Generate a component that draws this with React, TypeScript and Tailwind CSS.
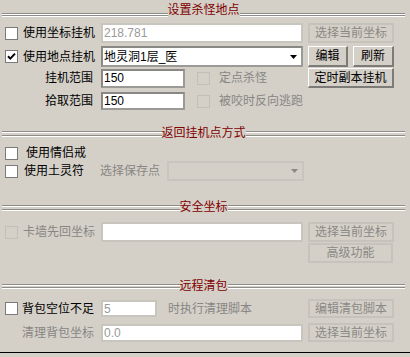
import React from 'react';

const GRAY = 'text-[#888683]';

function Groove({ className = '' }: { className?: string }) {
    return (
        <div className={`flex-1 flex flex-col ${className}`}>
            <div className="h-[2px] border-t border-b border-t-[#8e8c88] border-b-white" />
            <div className="h-[2px] border-t border-b border-t-[#8e8c88] border-b-white" />
        </div>
    );
}

function Header({ title, className, grooveClass }: { title: string; className: string; grooveClass: string }) {
    return (
        <div className={`flex items-start h-[16px] pl-[2px] pr-[5px] ${className}`}>
            <Groove className={grooveClass} />
            <span className="text-[#800000] leading-[16px] whitespace-nowrap">{title}</span>
            <Groove className={grooveClass} />
        </div>
    );
}

function Check({ checked = false, disabled = false, className = '' }: { checked?: boolean; disabled?: boolean; className?: string }) {
    return (
        <div
            className={`shrink-0 w-[13px] h-[13px] flex items-center justify-center border ${
                disabled ? 'border-[#c2bfb8] bg-[#d4d0c8]' : 'border-[#7a7a7a] bg-white'
            } ${className}`}
        >
            {checked && (
                <svg width="9" height="9" viewBox="0 0 9 9">
                    <path d="M1 4.2 L3.3 6.6 L8 1.6" fill="none" stroke="#000" strokeWidth="2" />
                </svg>
            )}
        </div>
    );
}

function Button({ label, disabled = false, className = '' }: { label: string; disabled?: boolean; className?: string }) {
    return (
        <div
            className={`shrink-0 flex items-center justify-center whitespace-nowrap ${
                disabled
                    ? 'border-2 border-[#c6c3bc] text-[#8a8884]'
                    : 'border-t border-l border-t-white border-l-white border-r-2 border-b-2 border-r-[#7c7b78] border-b-[#7c7b78] text-black'
            } ${className}`}
        >
            {label}
        </div>
    );
}

function Field({ value, disabled = false, className = '' }: { value: string; disabled?: boolean; className?: string }) {
    return (
        <div
            className={`shrink-0 flex items-center pl-[1px] bg-white border-2 ${
                disabled ? 'border-[#c8c5bf] text-[#9a9a9a]' : 'border-[#9c9a96] border-t-[#8a8884] border-l-[#8a8884] text-black'
            } ${className}`}
        >
            {value}
        </div>
    );
}

function Dropdown({ value, disabled = false, className = '' }: { value: string; disabled?: boolean; className?: string }) {
    return (
        <div
            className={`shrink-0 flex items-center pl-[1px] pr-[4px] border-2 ${
                disabled ? 'border-[#c8c5bf] bg-[#d4d0c8]' : 'border-[#9c9a96] border-t-[#8a8884] border-l-[#8a8884] bg-white'
            } ${className}`}
        >
            <span className="flex-1">{value}</span>
            <svg width="7" height="4" viewBox="0 0 7 4">
                <path d="M0 0 H7 L3.5 4 Z" fill={disabled ? '#8a8884' : '#000'} />
            </svg>
        </div>
    );
}

export default function App() {
    return (
        <div className="w-[410px] h-[357px] overflow-hidden bg-[#d4d0c8] text-[12px] leading-none text-black font-['Liberation_Sans','Noto_Sans_CJK_SC',sans-serif] flex flex-col">
            {/* 设置杀怪地点 */}
            <Header title="设置杀怪地点" className="mt-[2px]" grooveClass="mt-[11px]" />

            <div className="mt-[5px] h-[20px] flex items-center">
                <div className="w-[101px] flex items-center pl-[5px]">
                    <Check />
                    <span className="ml-[5px] whitespace-nowrap">使用坐标挂机</span>
                </div>
                <Field value="218.781" disabled className="w-[202px] h-[20px]" />
                <Button label="选择当前坐标" disabled className="ml-[5px] w-[86px] h-[20px]" />
            </div>

            <div className="mt-[3px] h-[21px] flex items-center">
                <div className="w-[101px] flex items-center pl-[5px]">
                    <Check checked />
                    <span className="ml-[5px] whitespace-nowrap">使用地点挂机</span>
                </div>
                <Dropdown value="地灵洞1层_医" className="w-[202px] h-[21px]" />
                <Button label="编辑" className="ml-[5px] w-[40px] h-[21px]" />
                <Button label="刷新" className="ml-[5px] w-[41px] h-[21px]" />
            </div>

            <div className="mt-[1px] h-[20px] flex items-center">
                <div className="w-[101px] text-right pr-[8px]">挂机范围</div>
                <div className="w-[207px] flex items-center">
                    <Field value="150" className="w-[84px] h-[19px]" />
                    <Check disabled className="ml-[12px] w-[12px] h-[12px]" />
                    <span className={`ml-[9px] ${GRAY}`}>定点杀怪</span>
                </div>
                <Button label="定时副本挂机" className="w-[86px] h-[20px]" />
            </div>

            <div className="mt-[4px] h-[18px] flex items-center">
                <div className="w-[101px] text-right pr-[8px]">拾取范围</div>
                <Field value="150" className="w-[84px] h-[18px]" />
                <Check disabled className="ml-[12px] w-[12px] h-[12px]" />
                <span className={`ml-[9px] ${GRAY}`}>被咬时反向逃跑</span>
            </div>

            {/* 返回挂机点方式 */}
            <Header title="返回挂机点方式" className="mt-[15px]" grooveClass="mt-[6px] gap-[2px]" />

            <div className="mt-[4px] h-[16px] flex items-center pl-[5px]">
                <Check />
                <span className="ml-[8px]">使用情侣戒</span>
            </div>

            <div className="h-[20px] flex items-center">
                <div className="w-[100px] flex items-center pl-[5px]">
                    <Check />
                    <span className="ml-[6px] whitespace-nowrap">使用土灵符</span>
                </div>
                <span className={`whitespace-nowrap ${GRAY}`}>选择保存点</span>
                <Dropdown value="" disabled className="ml-[7px] w-[137px] h-[20px]" />
            </div>

            {/* 安全坐标 */}
            <Header title="安全坐标" className="mt-[18px]" grooveClass="mt-[6px] gap-[2px]" />

            <div className="mt-[7px] h-[20px] flex items-center">
                <div className="w-[101px] flex items-center pl-[5px]">
                    <Check disabled />
                    <span className={`ml-[5px] whitespace-nowrap ${GRAY}`}>卡墙先回坐标</span>
                </div>
                <Field value="" disabled className="w-[202px] h-[20px]" />
                <Button label="选择当前坐标" disabled className="ml-[5px] w-[86px] h-[20px]" />
            </div>

            <div className="mt-[1px] h-[20px] flex items-center pl-[308px]">
                <Button label="高级功能" disabled className="w-[85px] h-[20px]" />
            </div>

            {/* 远程清包 */}
            <Header title="远程清包" className="mt-[15px]" grooveClass="mt-[6px] gap-[1px]" />

            <div className="mt-[5px] h-[19px] flex items-center">
                <div className="w-[101px] flex items-center pl-[5px]">
                    <Check />
                    <span className="ml-[4px] whitespace-nowrap">背包空位不足</span>
                </div>
                <div className="w-[207px] flex items-center">
                    <Field value="5" disabled className="w-[56px] h-[17px]" />
                    <span className={`ml-[11px] whitespace-nowrap ${GRAY}`}>时执行清理脚本</span>
                </div>
                <Button label="编辑清包脚本" disabled className="w-[86px] h-[19px]" />
            </div>

            <div className="mt-[5px] h-[19px] flex items-center">
                <div className={`w-[101px] pl-[22px] whitespace-nowrap ${GRAY}`}>清理背包坐标</div>
                <Field value="0.0" disabled className="w-[202px] h-[18px]" />
                <Button label="选择当前坐标" disabled className="ml-[5px] w-[86px] h-[19px]" />
            </div>

            <div className="mt-[10px] h-px bg-black" />
        </div>
    );
}
